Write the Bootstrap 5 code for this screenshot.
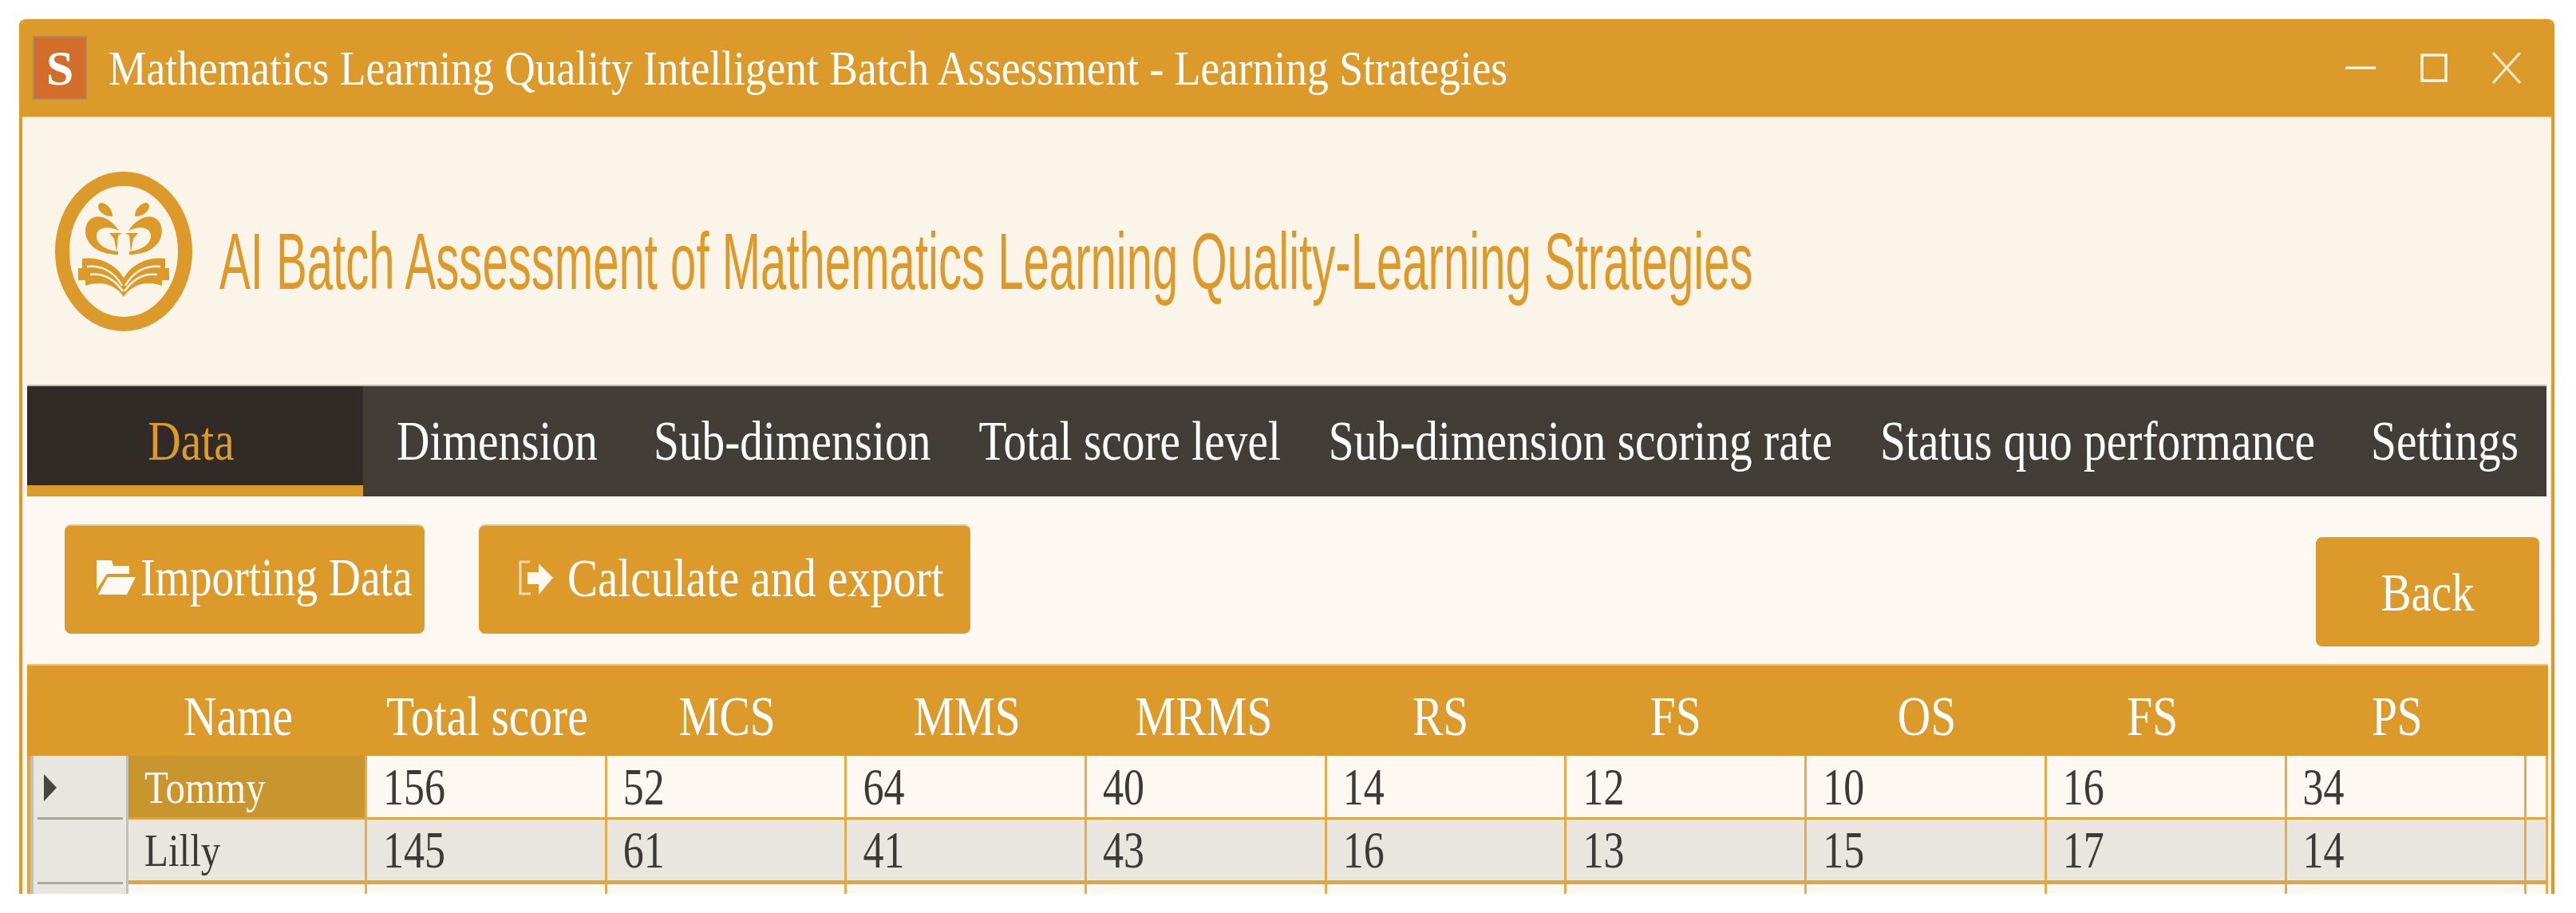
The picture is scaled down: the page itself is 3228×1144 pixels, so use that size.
<!DOCTYPE html>
<html lang="en">
<head>
  <meta charset="UTF-8" />
  <meta name="viewport" content="width=device-width, initial-scale=1.0"/>
  <title>Learning Strategies</title>
  <link href="https://cdn.jsdelivr.net/npm/bootstrap@5.3.3/dist/css/bootstrap.min.css" rel="stylesheet">
  <style>
    body {
      background: #fff;
      font-family: "Liberation Serif", "Times New Roman", serif;
    }
    .app-window {
      width: 3177px;
      height: 1096px;
      margin: 24px 0 0 24px;
      overflow: hidden;
      border-left: 4px solid #db9a2a;
      border-right: 4px solid #db9a2a;
      border-radius: 8px 8px 0 0;
    }
    .title-bar {
      height: 123px;
      background: #db9a2a;
      color: #fff;
      gap: 27px;
      margin: 0 -4px;
      padding-left: 17px;
      padding-right: 42px;
      border-bottom: 1px solid #efc682;
    }
    .app-badge {
      width: 68px;
      height: 80px;
      background: #d26d2a;
      border: 2px solid #ab8a68;
      font-weight: 700;
      font-size: 62px;
      line-height: 1;
    }
    .title-text { font-size: 53.5px; white-space: nowrap; }
    .title-text .st { transform: scaleY(1.16); }
    .win-btns { gap: 56px; }
    .brand-bar {
      height: 335px;
      background: #fbf4e9;
      padding-left: 41px;
      gap: 34px;
    }
    .brand-title {
      width: 1923px;
      color: #db9a2a;
      font-family: "Liberation Sans", Arial, sans-serif;
      font-size: 100px;
      line-height: 1;
      white-space: nowrap;
      transform: translateY(12px);
    }
    .brand-title span { display: inline-block; transform: scaleX(.581); transform-origin: left center; }
    .pane {
      flex: 1;
      min-height: 0;
      background: #fdf8f1;
      padding: 0 5px;
      border-left: 1px solid #e8e5dc;
      border-right: 1px solid #e8e5dc;
    }
    .tab-strip { height: 140px; background: #433d38; flex-wrap: nowrap; border-top: 2px solid #bdb9ae; }
    .tab-strip .nav-link {
      height: 138px;
      color: #fff;
      font-size: 57.4px;
      line-height: 138px;
      padding: 0 30px;
      white-space: nowrap;
      border-radius: 0;
    }
    .tab-strip .nav-link.active {
      width: 421px;
      padding-right: 40px;
      text-align: center;
      color: #db9a2a;
      background: #302b26;
      border-bottom: 14px solid #db9a2a;
    }
    .tab-strip .pad-l { padding-left: 37px; }
    .tab-strip .pad-r { padding-right: 33px; }
    .tab-strip .pad-first { padding-left: 42px; }
    .tool-row { height: 210px; padding: 35px 9px 0 47px; }
    .tool-group { gap: 68px; }
    .tool-btn {
      height: 137px;
      background: #db9a2a;
      border: 0;
      border-top: 2px solid #e9c486;
      border-radius: 8px;
      color: #fff;
      font-size: 57px;
      padding: 0;
      white-space: nowrap;
    }
    .tool-btn:hover { background: #db9a2a; color: #fff; }
    .btn-import { width: 451px; gap: 6px; padding: 0 0 6px 40px; font-size: 55.5px; }
    .btn-export { width: 616px; gap: 18px; padding: 0 0 6px 49px; }
    .btn-back { width: 280px; margin-top: 16px; border-top: 0; }
    .score-grid {
      table-layout: fixed;
      width: 3159px;
      margin: 0;
      border-collapse: separate;
      border-spacing: 0;
      font-family: "Liberation Serif", "Times New Roman", serif;
    }
    .score-grid > thead > tr > th {
      height: 115px;
      padding: 16px 0 0;
      vertical-align: middle;
      background: #db9a2a;
      border: 0;
      border-top: 2px solid #e9c486;
      color: #fff;
      font-size: 57.4px;
      font-weight: 400;
      text-align: center;
    }
    .score-grid > thead > tr > th.col-rowhead { width: 127px; }
    .score-grid > thead > tr > th.col-name { width: 299px; padding-right: 24px; }
    .score-grid > thead > tr > th.col-num { width: 300.7px; }
    .score-grid > thead > tr > th.shift-4 { padding-right: 8px; }
    .score-grid > thead > tr > th.shift-8 { padding-right: 16px; }
    .score-grid > thead > tr > th.shift-12 { padding-right: 24px; }
    .score-grid > thead > tr > th.shift-14 { padding-right: 28px; }
    .score-grid > thead > tr > th.shift-18 { padding-right: 36px; }
    .score-grid > tbody > tr > td {
      height: 80px;
      padding: 0 0 0 20px;
      vertical-align: middle;
      font-size: 52px;
      line-height: 1;
      color: #3b3a36;
      background: #fdf8f1;
      border: 0;
      border-right: 3px solid #e5ab4d;
      border-bottom: 3px solid #e2a640;
    }
    .score-grid > tbody > tr.row-alt > td { height: 81px; background: #e8e6df; border-bottom-width: 5px; }
    .score-grid > tbody > tr > td.row-head {
      position: relative;
      padding: 0;
      background: #e9e6df;
      border-left: 4px solid #e2a640;
      border-right: 3px solid #c4c0b6;
      border-bottom: 0;
      box-shadow: inset 4px 0 0 #c4c0b6;
    }
    .row-head::after {
      content: "";
      position: absolute;
      left: 9px;
      right: 4px;
      bottom: 0;
      height: 3px;
      background: #aaa79d;
    }
    .row-arrow {
      position: absolute;
      left: 17px;
      top: 23px;
      width: 0;
      height: 0;
      border-left: 16px solid #48443e;
      border-top: 17px solid transparent;
      border-bottom: 17px solid transparent;
    }
    .score-grid > tbody > tr > td.cell-picked { background: #c9952f; color: #fdf8f1; border-bottom-color: #e2a640; }
    .st { display: inline-block; transform: scaleY(1.2); }
    .st-name { display: inline-block; font-size: 49px; transform: scaleY(1.17); }
    .st-num { display: inline-block; transform: scaleY(1.28); }
  </style>
</head>
<body>
  <div class="app-window d-flex flex-column">
    <div class="title-bar d-flex align-items-center">
      <div class="app-badge d-flex align-items-center justify-content-center">S</div>
      <div class="title-text flex-grow-1"><span class="st">Mathematics Learning Quality Intelligent Batch Assessment - Learning Strategies</span></div>
      <div class="win-btns d-flex align-items-center">
        <svg width="38" height="40" viewBox="0 0 38 40"><path d="M0 20H38" stroke="#fff" stroke-width="3"/></svg>
        <svg width="34" height="36" viewBox="0 0 34 36"><rect x="2" y="2" width="30" height="32" fill="none" stroke="#fff" stroke-width="3.5" opacity=".9"/></svg>
        <svg width="36" height="40" viewBox="0 0 36 40"><path d="M1 1L35 39M35 1L1 39" stroke="#fbeccf" stroke-width="3"/></svg>
      </div>
    </div>

    <div class="brand-bar d-flex align-items-center">
      <svg width="172" height="200" viewBox="0 0 172 200" class="flex-shrink-0">
        <ellipse cx="86" cy="100" rx="77" ry="91" fill="none" stroke="#db9a2a" stroke-width="18"/>
        <g id="logoHalf" fill="#db9a2a">
          <path d="M58 39C66 40 72 48 72 56C64 57 55 51 54 44C54 41 56 39 58 39Z"/>
          <path d="M80 74C71 61 60 55 50 57C38 60 36 75 40 84C46 98 62 104 79 104V100C66 99 53 92 52 82C51 72 62 66 80 74Z"/>
          <path d="M68 77H84L79 80L77 101L74 84Z"/>
          <path d="M34 109C55 106 75 115 86 133V157C78 144 60 135 38 143V136H29V121H34Z"/>
          <path d="M40 119C58 117 74 125 84 143M44 129C60 127 74 134 85 150" fill="none" stroke="#fbf4e9" stroke-width="2.5"/>
        </g>
        <use href="#logoHalf" transform="translate(172 0) scale(-1 1)"/>
      </svg>
      <div class="brand-title"><span>AI Batch Assessment of Mathematics Learning Quality-Learning Strategies</span></div>
    </div>

    <div class="pane">
      <ul class="nav tab-strip">
        <li class="nav-item"><a class="nav-link active" href="#"><span class="st">Data</span></a></li>
        <li class="nav-item"><a class="nav-link pad-first pad-r" href="#"><span class="st">Dimension</span></a></li>
        <li class="nav-item"><a class="nav-link pad-l" href="#"><span class="st">Sub-dimension</span></a></li>
        <li class="nav-item"><a class="nav-link" href="#"><span class="st">Total score level</span></a></li>
        <li class="nav-item"><a class="nav-link" href="#"><span class="st">Sub-dimension scoring rate</span></a></li>
        <li class="nav-item"><a class="nav-link pad-r" href="#"><span class="st">Status quo performance</span></a></li>
        <li class="nav-item"><a class="nav-link pad-l pad-r" href="#"><span class="st">Settings</span></a></li>
      </ul>

      <div class="tool-row d-flex justify-content-between align-items-start">
        <div class="tool-group d-flex">
          <button class="btn tool-btn btn-import d-flex align-items-center" type="button">
            <svg width="49" height="44" viewBox="0 0 49 44"><path d="M0 0H19L21 7H41V17H13L0 37Z" fill="#fdf8f1"/><path d="M14 21H49L38 43H2Z" fill="#fdf8f1"/></svg>
            <span class="st">Importing Data</span>
          </button>
          <button class="btn tool-btn btn-export d-flex align-items-center" type="button">
            <svg width="44" height="44" viewBox="0 0 44 44"><path d="M15 2H3V42H16" fill="none" stroke="#f3dcae" stroke-width="3"/><path d="M12 15H26V4L44 22L26 43V30H12Z" fill="#fdf8f1"/></svg>
            <span class="st">Calculate and export</span>
          </button>
        </div>
        <button class="btn tool-btn btn-back" type="button"><span class="st">Back</span></button>
      </div>

      <table class="table score-grid">
        <thead>
          <tr>
            <th class="col-rowhead"></th>
            <th class="col-name"><span class="st">Name</span></th>
            <th class="col-num"><span class="st">Total score</span></th>
            <th class="col-num"><span class="st">MCS</span></th>
            <th class="col-num"><span class="st">MMS</span></th>
            <th class="col-num shift-4"><span class="st">MRMS</span></th>
            <th class="col-num shift-8"><span class="st">RS</span></th>
            <th class="col-num shift-14"><span class="st">FS</span></th>
            <th class="col-num"><span class="st">OS</span></th>
            <th class="col-num shift-18"><span class="st">FS</span></th>
            <th class="col-num shift-12"><span class="st">PS</span></th>
            <th></th>
          </tr>
        </thead>
        <tbody>
          <tr>
            <td class="row-head"><span class="row-arrow"></span></td>
            <td class="cell-picked"><span class="st-name">Tommy</span></td>
            <td><span class="st-num">156</span></td><td><span class="st-num">52</span></td><td><span class="st-num">64</span></td>
            <td><span class="st-num">40</span></td><td><span class="st-num">14</span></td><td><span class="st-num">12</span></td>
            <td><span class="st-num">10</span></td><td><span class="st-num">16</span></td><td><span class="st-num">34</span></td>
            <td></td>
          </tr>
          <tr class="row-alt">
            <td class="row-head"></td>
            <td><span class="st-name">Lilly</span></td>
            <td><span class="st-num">145</span></td><td><span class="st-num">61</span></td><td><span class="st-num">41</span></td>
            <td><span class="st-num">43</span></td><td><span class="st-num">16</span></td><td><span class="st-num">13</span></td>
            <td><span class="st-num">15</span></td><td><span class="st-num">17</span></td><td><span class="st-num">14</span></td>
            <td></td>
          </tr>
          <tr>
            <td class="row-head"></td>
            <td></td><td></td><td></td><td></td><td></td><td></td><td></td><td></td><td></td><td></td><td></td>
          </tr>
        </tbody>
      </table>
    </div>
  </div>
  <script src="https://cdn.jsdelivr.net/npm/bootstrap@5.3.3/dist/js/bootstrap.bundle.min.js"></script>
</body>
</html>
